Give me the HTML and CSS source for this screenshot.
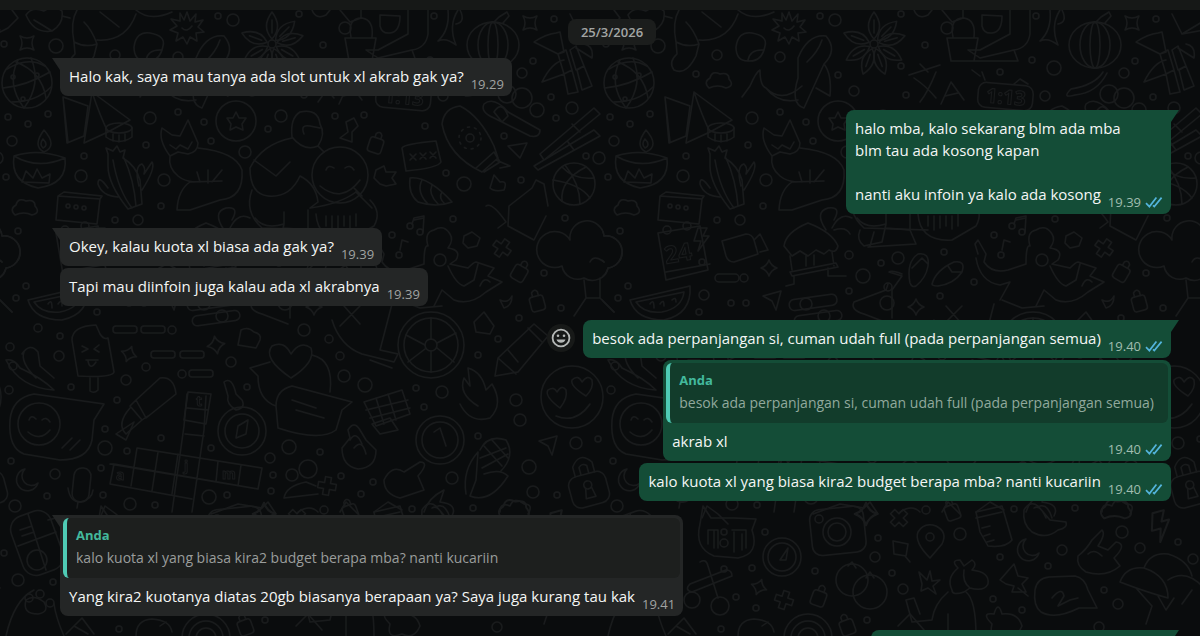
FILE: index.html
```html
<!DOCTYPE html>
<html lang="id">
<head>
<meta charset="utf-8">
<meta name="viewport" content="width=device-width, initial-scale=1">
<title>Chat</title>
<link rel="stylesheet" href="styles.css">
</head>
<body>
<svg class="sprites" aria-hidden="true">
  <defs>
    <symbol id="ticks" viewBox="0 0 18 12"><path d="M1 7.2 4.4 10.6 11.4 1.6M8 9.4 9.3 10.6 16.6 1.6" fill="none" stroke="currentColor" stroke-width="1.7"/></symbol>
    <g id="spark"><path d="M0-8Q2-2 8 0Q2 2 0 8Q-2 2-8 0Q-2-2 0-8Z"/></g>
    <g id="pad"><path d="M-7-7Q0-3 7-7Q3 0 7 7Q0 3-7 7Q-3 0-7-7Z"/></g>
    <g id="cross"><path d="M-3-9H3V-3H9V3H3V9H-3V3H-9V-3H-3Z"/></g>
    <g id="petal"><path d="M0-5C-9-15-6-24 0-32C6-24 9-15 0-5M0-11V-24"/></g>
    <g id="tag"><rect x="-7" y="-6" width="14" height="15" rx="3"/><path d="M-3-6V-10Q0-14 3-10V-6"/></g>
    <g id="bolt"><path d="M-3-11H6L2-3H8L-3 12L0 2H-7Z"/></g>
    <g id="moon"><path d="M-2-11A11 11 0 1 0 11 3A9 9 0 0 1-2-11Z"/></g>
    <g id="cloud"><path d="M-9 7Q-15 1-8-3Q-6-11 2-7Q11-9 11-2Q17 5 8 7Q0 3-9 7Z"/></g>
    <g id="bubble"><path d="M-30-8Q-28-20-16-21L10-22Q20-20 23-8L32 10L14 10Q-10 22-24 14Q-32 8-30-8Z"/></g>
    <g id="dart"><path d="M-9-5 9-10 4 9 0 0Z"/></g>
    <g id="art">
      <!-- upper band -->
      <path d="M0 32 8 28 18 18 12 10M26 15Q32 6 44 11Q54 4 62 11Q64 24 52 31Q34 34 26 15ZM62 16 70 18M34 20Q44 26 52 31"/>
      <path d="M77 10Q70 22 74 42L75 54Q66 62 72 70Q84 76 94 56L97 44Q92 30 84 22M97 40Q126 42 136 14M100 12 119 27M74 42Q85 48 97 44M136 10Q150 22 172 12"/>
      <path d="M134 47Q136 31 150 33Q166 36 163 46Q160 62 146 61Q134 61 134 47ZM146 60Q148 49 162 50"/>
      <path d="M187 12 190 21 196 14 195 22 203 20 198 27 204 32 196 33 197 41 190 37 187 44 183 37 176 41 178 33 170 30 177 26 171 19 180 21 180 13 184 20ZM182 28Q187 33 192 26"/>
      <path d="M196 58Q206 34 224 36Q236 50 222 64L202 108Q188 104 196 78ZM205 62Q216 52 220 40M222 64Q230 74 228 96L214 88M140 97 148 86Q154 72 158 70Q158 86 164 88Q180 104 200 86M164 88Q176 104 196 100"/>
      <use href="#cloud" x="116" y="81"/>
      <g transform="translate(272 44)"><circle r="4"/><use href="#petal"/><use href="#petal" transform="rotate(45)"/><use href="#petal" transform="rotate(75)"/><use href="#petal" transform="rotate(120)"/><use href="#petal" transform="rotate(160)"/><use href="#petal" transform="rotate(200)"/><use href="#petal" transform="rotate(240)"/><use href="#petal" transform="rotate(290)"/></g>
      <path d="M345 38H376L372 61H349ZM351 37Q347 18 362 18Q374 20 372 37M372 61H416L412 50L378 58 366 50H378L408 34V10M428 10V34Q426 48 412 50M380 15V26Q382 34 390 33Q400 32 400 16ZM340 10 350 22 361 18V10M312 10Q316 20 326 15L330 10"/>
      <circle cx="345" cy="28" r="6"/>
      <path d="M438 41Q450 30 448 10M438 41Q446 37 456 45M458 10Q448 26 456 45M456 24Q466 22 460 10"/>
      <g transform="translate(493 45)"><ellipse rx="26" ry="23"/><ellipse rx="15" ry="23"/><ellipse rx="5" ry="23"/><path d="M0-22 6-28 14-33 16-29 10-22M8 27Q0 40-24 44Q-34 54-20 50Q2 48 12 28"/></g>
      <use href="#pad" x="530" y="23"/>
      <path d="M534 42Q546 34 556 33L560 32 564 52 558 54ZM558 54 566 50 572 70 564 74ZM564 74 572 70 578 92 568 94ZM576 46 584 66 576 70 570 50ZM577 70 584 66 592 86 582 90ZM564 60Q552 62 542 82L564 74M584 44Q594 46 592 58L576 48M570 14 580 34 600 22M580 34 602 30"/>
      <!-- globe and lamp -->
      <circle cx="27" cy="83" r="25"/><path d="M7 69Q28 56 45 66M3 88Q26 86 50 72M12 102Q36 102 51 87M18 60Q6 84 24 108M31 58Q42 84 24 108M16 62Q42 72 46 98"/><circle cx="13" cy="77" r="2"/><circle cx="37" cy="75" r="2"/><circle cx="23" cy="99" r="2"/>
      <path d="M63 97 88 106 84 136 67 143ZM63 97 68 142M92 92 130 120 108 132 84 143ZM92 92Q100 116 108 132"/><ellipse cx="119" cy="128" rx="13" ry="5"/><path d="M106 128V137Q119 146 132 137V128M113 134V141M119 135V142M125 134V141"/>
      <path d="M14 156Q38 148 65 158Q68 184 38 188Q10 182 14 156ZM14 156Q38 170 65 158M44 152Q32 146 44 130Q58 146 44 152ZM43 148Q39 144 43 139Q49 145 43 148ZM22 182 26 171 33 178 37 169 42 178 50 174 49 183Z"/>
      <path d="M108 154 106 148 113 151 117 146 120 152 125 150 123 158Q136 166 140 180L142 204 128 209Q108 184 108 166ZM113 160Q118 190 132 208M124 158Q134 180 136 206M108 188Q98 174 98 184Q102 196 118 197M139 186Q134 166 142 164Q146 168 144 174L152 162Q156 168 142 190"/>
      <path d="M162 128 172 135 180 136 188 120 198 143Q198 152 188 154L178 152 170 156Q158 140 162 128ZM170 145 176 149 180 145 188 149 192 142M170 156Q168 168 178 176Q184 181 194 182M198 148Q236 152 242 170Q244 198 220 200L190 210H177Q178 190 190 182L222 181M200 182 197 172M208 183V170M212 182 222 170"/>
      <circle cx="236" cy="121" r="20"/><path d="M236 112 239 118 246 118 242 124 243 130 236 127 230 130 231 124 227 118 233 118Z"/>
      <path d="M292 137Q290 118 300 112Q318 108 320 124Q326 134 318 146Q304 152 292 137ZM304 134Q300 124 310 126L320 128M292 138Q262 144 250 168Q250 194 268 196Q290 198 300 176M254 160 276 176 290 162M318 146 324 152M300 176Q316 184 318 202L310 208Q340 204 356 192L372 208M252 190Q244 212 262 228L326 230"/>
      <circle cx="340" cy="175" r="28"/><path d="M326 170Q328 164 334 168M345 168Q350 164 354 170M320 186Q342 204 360 180M354 188 362 196 356 192"/>
      <use href="#tag" transform="translate(376 144) rotate(18)"/><path d="M346 122 354 118 358 126 352 132 352 142 340 138 348 132ZM376 170 384 166 386 172 396 172 392 178 396 184 386 186 380 184 374 178Z"/>
      <!-- translation card and digital clock -->
      <path d="M307 75 338 65M318 64 326 72M334 72Q326 92 318 102M312 78Q324 86 334 98"/><path d="M339 104 349 82 362 100M343 96 356 93"/>
      <rect x="376" y="84" width="55" height="25" rx="8" transform="rotate(5 403 96)"/><text x="384" y="104" transform="rotate(5 403 96)" font-size="20">1:13</text><path d="M412 84 418 79 426 84M378 76 370 70M383 80 380 72"/>
      <path d="M442 124Q444 108 460 106Q480 116 494 146L498 158 482 172Q448 156 442 124ZM476 168 494 152 500 162 484 172M496 160 510 166 500 168"/><circle cx="470" cy="138" r="4"/><circle cx="470" cy="138" r="11" stroke-dasharray="2 5"/>
      <path d="M484 104Q494 96 508 112L540 130Q540 138 530 136L494 118Q480 112 484 104ZM494 112Q502 100 508 116L502 122Z"/><circle cx="507" cy="94" r="9"/><circle cx="522" cy="98" r="10"/><circle cx="537" cy="110" r="7"/>
      <path d="M540 154 594 108 600 114 544 160ZM534 166 594 130 600 136 538 170ZM572 124 580 132M568 142 574 150"/>
      <circle cx="574" cy="184" r="21"/><path d="M562 167Q574 180 594 178M553 180Q580 184 590 198M586 167Q560 180 562 201M565 165Q580 184 580 204"/>
      <path d="M402 148Q404 144 436 141L441 162Q438 168 406 171ZM410 154 416 160M416 154 410 160M420 153 426 159M426 153 420 159M430 152 436 158M436 152 430 158"/>
      <path d="M410 178Q428 176 452 202Q436 208 418 202Q408 194 410 178ZM422 180Q416 192 428 204M432 185Q428 194 438 204M442 192Q438 198 445 204"/>
      <path d="M508 146 527 143 520 158ZM490 188 494 175 500 182Q508 180 504 190Q494 192 490 188ZM509 206 532 188 536 180 544 184 548 206M486 206Q492 202 506 222L498 228M509 206 508 226 534 240 546 216"/>
      <!-- message box, notes, voice wave -->
      <path d="M58 196 100 199 97 224 56 220ZM58 196 64 192 102 196 100 199"/><circle cx="68" cy="206" r="2"/><circle cx="76" cy="207" r="2"/><circle cx="84" cy="208" r="2"/>
      <use href="#cloud" x="24" y="208"/>
      <path d="M316 214Q318 242 350 240L374 226Q382 212 370 200M326 216V226M332 216V230M338 216V228M344 216V226M350 216V229M356 214V226"/>
      <path d="M182 246Q184 232 206 223Q230 232 236 246Q234 254 227 250L222 254 214 250 206 256 198 251 190 256ZM188 256 190 270M230 252 232 266M204 256V266M212 255V265M188 272 234 263 236 267 190 276ZM192 276V284L184 286M226 268V276L244 276M224 230Q212 212 226 208Q240 206 232 220M230 228Q238 212 250 218M232 230Q244 226 248 234"/>
      <path d="M255 218Q264 230 284 224L280 242 262 246Q254 240 258 230M284 224V212M284 228 308 230 314 244 266 247M272 232 268 246M308 230V210"/>
      <path d="M56 233 98 226 106 270 64 280ZM64 272 108 264"/><circle cx="65" cy="230" r="4"/><circle cx="85" cy="226" r="4"/><text x="64" y="264" transform="rotate(-10 64 264)" font-size="24">24</text>
      <use href="#bolt" x="99" y="239"/><path d="M120 241 144 234Q150 234 152 240L156 254 132 262Q126 262 124 256ZM152 240 158 234 166 250 158 252"/>
      <use href="#spark" x="167" y="268"/><rect x="113" y="274" width="24" height="8" rx="4"/><use href="#dart" x="170" y="301"/>
      <path d="M28 300 88 286Q90 314 62 320Q34 320 28 300ZM34 302 82 292Q80 308 60 312Q42 314 34 302ZM48 304Q52 298 52 308M58 304Q62 298 62 306M70 300Q74 296 74 302"/>
      <path d="M412 224 414 218 424 216 423 232M414 220 424 218M400 250 402 240 408 242"/><circle cx="410" cy="226" r="3"/><circle cx="420" cy="232" r="3"/><circle cx="399" cy="255" r="3"/>
      <path d="M464 236 472 232 480 238 477 246 468 248 463 243Z"/><use href="#cross" transform="translate(502 248) rotate(35)"/><use href="#tag" transform="translate(520 272) rotate(30)"/><use href="#tag" transform="translate(537 302) rotate(-15)"/>
      <path d="M308 283Q304 262 316 254Q328 252 326 266Q324 278 314 286Q310 288 308 283ZM310 268 320 258 326 264M330 284Q334 270 352 262Q364 260 360 272Q352 284 336 286Q330 286 330 284ZM346 266 350 272 360 272"/>
      <path d="M376 254 373 244 376 240 384 254 382 262Q390 274 406 270L424 264Q424 244 428 246Q424 232 434 230Q444 224 450 234Q454 240 448 248Q462 250 456 260L450 264 468 268Q474 262 476 262L494 268 488 276 502 282 486 292Q470 306 454 300L442 290 434 306M374 258Q378 282 398 285L408 282 398 300M448 266Q456 284 464 286L474 280 478 264M480 286Q484 276 490 282"/><circle cx="440" cy="260" r="6"/>
      <path d="M287 272 300 276 290 290 290 318M287 272Q290 270 300 274M286 284 284 290 252 302Q248 310 262 314L288 324"/><circle cx="285" cy="303" r="7"/><circle cx="286" cy="287" r="4"/><use href="#spark" x="314" y="307"/>
      <rect x="187" y="297" width="48" height="11" rx="5" transform="rotate(-8 210 302)"/><circle cx="204" cy="304" r="6"/><rect x="192" y="314" width="48" height="10" rx="5" transform="rotate(-8 210 318)"/><circle cx="222" cy="316" r="6"/>
      <g id="tree"><path d="M570 240A17 17 0 1 1 604 236M604 236A16 16 0 1 1 608 268A16 16 0 0 1 584 278A16 16 0 0 1 562 266A18 18 0 1 1 570 240M584 280 586 298H600V278M586 298 574 316M600 298 614 312M590 262Q594 254 604 262"/></g><use href="#tree" x="-602"/>
      <!-- middle band -->
      <path d="M72 340Q72 326 96 325L100 334Q104 340 108 338L114 372Q112 378 78 376ZM90 378V391Q94 394 98 390V378M82 346 88 349 82 352M99 345 94 349 99 352M86 360H98M88 361Q90 371 96 362"/>
      <rect x="113" y="326" width="24" height="7" rx="3"/><rect x="141" y="326" width="24" height="7" rx="3"/><circle cx="172" cy="330" r="4"/><rect x="151" y="351" width="24" height="7" rx="3"/><rect x="180" y="351" width="24" height="7" rx="3"/><rect x="189" y="370" width="24" height="7" rx="3"/><circle cx="182" cy="374" r="4"/><use href="#spark" transform="translate(129 354) rotate(20)"/><use href="#spark" transform="translate(216 345) rotate(-10) scale(1.1)"/><path d="M238 345 241 330Q248 326 254 332Q262 334 260 340L256 348Z"/>
      <path d="M6 360Q14 358 20 368 42 378 54 390Q20 388 6 360ZM22 354Q30 342 38 352L40 366 54 378M24 352Q20 362 36 378"/><circle cx="13" cy="366" r="4"/>
      <path d="M291 378Q262 358 272 346Q284 340 291 354Q300 340 311 348Q316 362 291 378ZM270 362 250 368 258 376Q258 400 276 406M312 355Q334 360 330 392M276 406Q276 390 292 386L352 402 342 410 336 430Q320 442 278 428ZM292 400 316 408M296 410 324 418"/>
      <path d="M10 420Q12 398 34 394L104 404 94 420 92 440Q88 460 60 460L24 454Q8 448 10 420Z"/><circle cx="39" cy="424" r="21"/><path d="M29 420Q31 414 36 419M42 420Q46 416 50 422M28 432Q40 442 50 430M62 448 72 438M70 450 80 440"/>
      <path d="M136 400 160 378Q174 376 176 394L146 418ZM136 400 130 406 142 420 148 416M130 408Q116 424 126 434L142 420M188 392 211 394 206 424 184 420ZM187 408 208 410M224 382Q232 376 236 394L242 400Q246 408 236 410Q226 404 228 396Z"/><text x="196" y="406" font-size="14">t</text><circle cx="242" cy="431" r="24"/><circle cx="242" cy="431" r="17"/><path d="M236 438 238 426 248 420 246 434ZM116 434 134 422 126 440Z"/>
      <circle cx="431" cy="345" r="33"/><circle cx="431" cy="345" r="27"/><circle cx="431" cy="345" r="6"/><path d="M431 318V339M431 351V372M425 345 406 335M425 349 408 362M437 343 456 333M437 348 454 362M332 320Q340 346 362 354L394 362 398 354 380 350 392 304M340 326 360 306M370 360 392 368M344 306 360 324M400 300 420 308 442 306"/>
      <path d="M495 376 498 358 534 324 548 336 518 372ZM498 358 516 374M528 328 542 342M508 350 518 362"/><path d="M478 406Q458 394 464 378L470 386 468 368Q482 372 486 390L492 384Q504 404 490 418Q470 424 460 404"/><circle cx="572" cy="397" r="31"/><path d="M560 408Q544 396 548 390Q554 386 557 392Q562 384 566 390Q568 398 560 408ZM586 396Q570 386 572 380Q578 374 582 382Q588 374 592 380Q594 388 586 396ZM556 416Q576 424 590 404M474 322 484 312 494 326 490 334 476 332ZM500 300Q508 304 512 296Q512 306 504 308Z"/>
      <path d="M364 402 402 390 410 414 376 426ZM376 398 384 424M388 394 396 420M366 410 408 400M370 418 410 408"/>
      <circle cx="440" cy="440" r="24"/><circle cx="440" cy="440" r="18"/><path d="M434 432 440 428 446 446"/>
      <path d="M466 494Q462 470 478 452L476 480 470 496Q490 504 508 476Q500 468 484 474M480 450Q488 434 506 440Q516 456 500 472M484 446 502 466M492 440 508 458M480 458 506 448M482 468 508 454"/>
      <path d="M187 394 184 426 172 512M206 396 204 430 192 512M185 434 204 436M137 448 262 468 258 489 110 464 114 464M137 448 131 486M114 464 258 489M114 464 110 484 192 499M158 452 152 491M178 454 172 494M218 461 216 482M241 465 238 486"/><text x="116" y="480" font-size="14">a</text><text x="222" y="479" font-size="14">m</text><text x="184" y="471" font-size="14">j</text>
      <rect x="73" y="468" width="17" height="34" rx="8" transform="rotate(6 82 485)"/><path d="M68 488Q70 502 80 502 92 500 93 490M78 502 77 508"/><use href="#moon" x="27" y="480"/>
      <path d="M342 448 350 438 348 430Q354 420 360 430L366 440 376 450Q376 468 358 469Q342 466 342 448ZM350 440Q356 430 362 444M354 448Q362 438 366 454M384 480Q392 464 404 472L420 462Q430 462 418 476L424 490 400 498Q384 494 384 480M372 424 390 418 398 430 380 434Z"/>
      <circle cx="292" cy="475" r="6"/><circle cx="308" cy="469" r="9"/><path d="M284 498Q286 486 306 482L316 486M284 498 318 494"/><use href="#cross" transform="translate(327 486) rotate(10)"/>
      <g transform="translate(587 482) rotate(-15)"><rect x="-19" y="-8" width="38" height="32" rx="9"/><path d="M-10-8V-18Q0-32 10-18V-8M-4-8V-16Q0-20 4-16V-8M-3 6-5 16H5L3 6"/><circle cy="3" r="4"/></g>
      <use href="#dart" x="548" y="446"/><path d="M424 512Q428 498 444 490L440 502Q458 504 452 516M500 512Q500 502 510 506Q514 496 524 504Q534 504 528 514"/>
      <!-- lower band -->
      <rect x="16" y="512" width="42" height="62" rx="14" transform="rotate(-20 37 543)"/><path d="M18 546 56 532M28 514 46 570M20 530 32 526M22 536 34 532M48 520 56 518"/><circle cx="37" cy="560" r="10"/><path d="M100 518 105 506 116 514 126 524M211 514 238 504 262 508 268 502 276 514M298 512Q310 504 318 512M340 512 346 502 358 514M374 512 388 502 402 510"/>
      <path d="M101 506 109 518 132 518 154 519 150 530Q158 554 136 558L112 556Q92 548 98 524ZM106 530V544M112 530V548M132 532V552M140 534V550M106 530H116V548M130 530H144V548"/><circle cx="122" cy="532" r="3"/><circle cx="122" cy="543" r="4"/>
      <circle cx="180" cy="557" r="19"/><circle cx="180" cy="557" r="14"/><path d="M178 560 186 548 184 560Z"/><path d="M98 562Q104 558 106 566L116 598M130 576 90 592Q82 590 88 584L124 570Q130 570 130 576Z"/><circle cx="118" cy="606" r="9"/><circle cx="90" cy="600" r="8"/><use href="#spark" transform="translate(157 587) rotate(20)"/><use href="#cross" transform="translate(182 600) rotate(18)"/>
      <rect x="209" y="508" width="54" height="46" rx="10" transform="rotate(-6 235 532)"/><circle cx="235" cy="532" r="14"/><circle cx="235" cy="532" r="9"/><circle cx="217" cy="519" r="4"/><use href="#spark" transform="translate(264 514) scale(1.4)"/>
      <use href="#cross" transform="translate(297 518) rotate(45)"/><path d="M328 558Q312 542 316 532Q322 522 334 526Q346 532 340 544Z"/><circle cx="328" cy="537" r="4"/><use href="#tag" transform="translate(350 511) rotate(-20)"/><path d="M291 541 306 544 304 556 292 554ZM303 556 308 562"/>
      <path d="M374 512 400 506 410 540Q404 548 386 546L378 532ZM374 518 400 512M380 528 388 526M382 536 388 534M385 542 392 540"/><path d="M422 510Q428 500 436 506L448 520 464 522Q466 528 456 530Q444 540 430 532Q420 524 422 510ZM432 508Q438 504 444 518M438 506Q446 504 450 518"/>
      <use href="#cloud" transform="translate(513 510) scale(1.2)"/><use href="#bolt" transform="translate(558 526) rotate(-15) scale(1.3)"/><use href="#moon" x="426" y="550"/><path d="M476 556Q484 550 490 540L500 530Q504 534 496 546L506 550 514 542Q526 544 512 558L518 566Q504 578 484 572Q474 566 476 556ZM486 554Q492 548 500 556"/>
      <circle cx="250" cy="580" r="16"/><circle cx="268" cy="592" r="17"/><path d="M264 578 268 572 272 578M246 566 250 562 254 568"/><path d="M317 572 325 580 328 571 330 581 338 580 331 586 334 594 326 588 319 591 320 584Z"/><path d="M350 590Q344 578 356 568Q348 560 358 560L362 566 370 560Q376 564 370 570Q388 572 386 584Q382 592 368 588L362 592Q350 596 350 590ZM362 570Q360 582 368 588M346 592Q332 604 330 620L310 622 304 600 312 598 318 614M364 592Q374 600 374 636M346 614V636"/>
      <path d="M398 580 412 564 416 576 426 578 420 584 424 592 410 592 412 586 404 584ZM416 588 426 596"/><use href="#bubble" transform="translate(463 598)"/><path d="M450 598Q460 586 462 596L456 606 468 600 476 598"/>
      <path d="M518 582Q524 566 542 568Q566 576 566 598Q544 592 518 582ZM542 568Q548 552 566 554Q586 560 590 576M566 580Q584 568 602 588M534 588 550 606 544 624M556 596 564 610 572 598M590 590 580 604"/>
      <path d="M6 636Q14 600 34 590M26 600Q22 614 38 614Q50 612 44 602Q34 594 26 600ZM54 604Q56 618 64 636"/><circle cx="29" cy="598" r="4"/><circle cx="40" cy="594" r="4"/><circle cx="50" cy="603" r="4"/><path d="M66 634 82 618 94 634M74 626 88 634M136 636Q136 620 152 619Q170 620 172 632M160 626 166 622"/><circle cx="206" cy="638" r="24"/><circle cx="206" cy="638" r="17"/><circle cx="206" cy="638" r="10"/><use href="#tag" transform="translate(245 626) rotate(-20)"/><use href="#tag" transform="translate(217 597) rotate(20)"/><path d="M296 626 308 614 322 630M390 624Q378 612 392 614Q396 600 400 614Q416 612 420 626Q414 640 402 634Q386 640 390 624Z"/>
      <!-- scattered dots -->
      <g id="dots"><circle cx="56" cy="46" r="7"/><circle cx="4" cy="44" r="3"/><use href="#pad" x="27" y="43"/><circle cx="115" cy="55" r="5"/><circle cx="218" cy="16" r="3"/><circle cx="233" cy="20" r="6"/><circle cx="323" cy="45" r="3"/><circle cx="299" cy="14" r="3"/><circle cx="434" cy="16" r="3"/><circle cx="554" cy="19" r="3"/><circle cx="236" cy="75" r="3"/><circle cx="252" cy="91" r="5"/><circle cx="304" cy="95" r="3"/><circle cx="299" cy="66" r="3"/><circle cx="398" cy="72" r="3"/><circle cx="430" cy="60" r="3"/><circle cx="452" cy="68" r="7"/><circle cx="443" cy="96" r="5"/><circle cx="522" cy="73" r="5"/><circle cx="533" cy="61" r="3"/><circle cx="178" cy="57" r="5"/><circle cx="94" cy="74" r="3"/><circle cx="178" cy="112" r="3"/><circle cx="150" cy="118" r="6"/><circle cx="204" cy="122" r="3"/><circle cx="281" cy="116" r="6"/><circle cx="268" cy="129" r="3"/><circle cx="335" cy="116" r="3"/><circle cx="364" cy="115" r="3"/><circle cx="48" cy="114" r="3"/><circle cx="8" cy="117" r="3"/><circle cx="28" cy="124" r="3"/><circle cx="12" cy="141" r="5"/><circle cx="146" cy="145" r="3"/><circle cx="211" cy="141" r="3"/><circle cx="245" cy="152" r="6"/><circle cx="84" cy="156" r="3"/><circle cx="81" cy="176" r="6"/><circle cx="6" cy="177" r="3"/><circle cx="164" cy="180" r="6"/><circle cx="161" cy="206" r="3"/><circle cx="551" cy="97" r="3"/><circle cx="572" cy="108" r="6"/><circle cx="556" cy="118" r="3"/><circle cx="425" cy="126" r="3"/><circle cx="504" cy="136" r="3"/><circle cx="586" cy="156" r="3"/><circle cx="599" cy="158" r="6"/><circle cx="464" cy="184" r="7"/><circle cx="446" cy="173" r="3"/><circle cx="521" cy="180" r="3"/><circle cx="115" cy="220" r="3"/><circle cx="138" cy="220" r="5"/><circle cx="18" cy="231" r="3"/><circle cx="100" cy="262" r="3"/><circle cx="26" cy="286" r="3"/><circle cx="16" cy="298" r="3"/><circle cx="142" cy="278" r="4"/><circle cx="102" cy="295" r="5"/><circle cx="97" cy="312" r="3"/><circle cx="129" cy="303" r="3"/><circle cx="144" cy="303" r="3"/><circle cx="247" cy="255" r="4"/><circle cx="261" cy="276" r="7"/><circle cx="279" cy="263" r="3"/><circle cx="296" cy="258" r="6"/><circle cx="247" cy="291" r="3"/><circle cx="342" cy="252" r="3"/><circle cx="372" cy="282" r="3"/><circle cx="338" cy="296" r="3"/><circle cx="392" cy="235" r="3"/><circle cx="453" cy="219" r="3"/><circle cx="565" cy="218" r="3"/><circle cx="544" cy="273" r="3"/><circle cx="561" cy="308" r="3"/><circle cx="519" cy="318" r="3"/><circle cx="38" cy="328" r="4"/><circle cx="60" cy="336" r="3"/><circle cx="59" cy="356" r="5"/><circle cx="10" cy="347" r="4"/><circle cx="126" cy="380" r="5"/><circle cx="146" cy="367" r="4"/><circle cx="71" cy="387" r="3"/><circle cx="9" cy="390" r="4"/><circle cx="117" cy="400" r="3"/><circle cx="231" cy="362" r="5"/><circle cx="247" cy="387" r="3"/><circle cx="304" cy="330" r="6"/><circle cx="329" cy="339" r="4"/><circle cx="340" cy="356" r="4"/><circle cx="344" cy="376" r="6"/><circle cx="365" cy="385" r="7"/><circle cx="416" cy="388" r="3"/><circle cx="442" cy="392" r="6"/><circle cx="424" cy="407" r="3"/><circle cx="498" cy="339" r="3"/><circle cx="478" cy="355" r="3"/><circle cx="516" cy="400" r="6"/><circle cx="520" cy="420" r="6"/><circle cx="576" cy="443" r="6"/><circle cx="529" cy="467" r="7"/><circle cx="478" cy="436" r="3"/><circle cx="452" cy="478" r="6"/><circle cx="533" cy="492" r="6"/><circle cx="557" cy="495" r="3"/><circle cx="598" cy="439" r="3"/><circle cx="105" cy="448" r="7"/><circle cx="127" cy="451" r="3"/><circle cx="101" cy="468" r="3"/><circle cx="105" cy="429" r="3"/><circle cx="11" cy="461" r="3"/><circle cx="55" cy="474" r="5"/><circle cx="47" cy="496" r="3"/><circle cx="15" cy="506" r="6"/><circle cx="103" cy="495" r="3"/><circle cx="130" cy="504" r="6"/><circle cx="155" cy="505" r="3"/><circle cx="209" cy="497" r="7"/><circle cx="227" cy="495" r="3"/><circle cx="161" cy="438" r="3"/><circle cx="211" cy="448" r="3"/><circle cx="289" cy="447" r="7"/><circle cx="270" cy="458" r="5"/><circle cx="320" cy="452" r="3"/><circle cx="273" cy="475" r="3"/><circle cx="271" cy="491" r="3"/><circle cx="341" cy="476" r="3"/><circle cx="361" cy="494" r="3"/><circle cx="373" cy="482" r="3"/><circle cx="4" cy="553" r="3"/><circle cx="18" cy="580" r="6"/><circle cx="53" cy="582" r="3"/><circle cx="163" cy="532" r="3"/><circle cx="122" cy="569" r="3"/><circle cx="150" cy="568" r="3"/><circle cx="134" cy="597" r="3"/><circle cx="154" cy="608" r="3"/><circle cx="119" cy="629" r="3"/><circle cx="276" cy="538" r="3"/><circle cx="273" cy="557" r="5"/><circle cx="213" cy="571" r="3"/><circle cx="290" cy="573" r="3"/><circle cx="301" cy="589" r="5"/><circle cx="324" cy="510" r="4"/><circle cx="358" cy="534" r="6"/><circle cx="412" cy="509" r="3"/><circle cx="473" cy="508" r="3"/><circle cx="398" cy="557" r="3"/><circle cx="446" cy="566" r="3"/><circle cx="460" cy="550" r="5"/><circle cx="520" cy="532" r="6"/><circle cx="538" cy="548" r="5"/><circle cx="576" cy="542" r="3"/><circle cx="591" cy="559" r="5"/><circle cx="502" cy="590" r="3"/><circle cx="516" cy="604" r="5"/><circle cx="391" cy="599" r="3"/><circle cx="420" cy="610" r="3"/><circle cx="265" cy="620" r="3"/><circle cx="497" cy="627" r="5"/></g>
    </g>
    <pattern id="wallpaper" width="602" height="640" patternUnits="userSpaceOnUse">
      <use href="#art"/><use href="#art" x="-602"/>
    </pattern>
  </defs>
</svg>

<header class="topbar"></header>
<main class="chat">
  <svg class="wallpaper" aria-hidden="true"><rect width="100%" height="100%" fill="url(#wallpaper)"/></svg>
  <time class="date">25/3/2026</time>

  <article class="msg in tail first">
    <p class="text">Halo kak, saya mau tanya ada slot untuk xl akrab gak ya?</p>
    <span class="meta">19.29</span>
  </article>

  <article class="msg out tail">
    <p class="text wide">halo mba, kalo sekarang blm ada mba<br>blm tau ada kosong kapan<br><br></p>
    <p class="text">nanti aku infoin ya kalo ada kosong</p>
    <span class="meta">19.39 <svg class="ticks" role="img" aria-label="Dibaca"><use href="#ticks"/></svg></span>
  </article>

  <article class="msg in tail">
    <p class="text">Okey, kalau kuota xl biasa ada gak ya?</p>
    <span class="meta">19.39</span>
  </article>
  <article class="msg in">
    <p class="text">Tapi mau diinfoin juga kalau ada xl akrabnya</p>
    <span class="meta">19.39</span>
  </article>

  <div class="row">
    <button class="react" type="button" aria-label="Beri reaksi">
      <svg viewBox="0 0 20 20" class="smile" aria-hidden="true"><circle cx="10" cy="10" r="8.4" fill="none" stroke="currentColor" stroke-width="1.8"/><circle cx="7" cy="7.8" r="1.3" fill="currentColor"/><circle cx="13" cy="7.8" r="1.3" fill="currentColor"/><path d="M5.500 11.500H14.500Q13.300 14.800 10 14.800Q6.700 14.800 5.500 11.500Z" fill="currentColor"/></svg>
    </button>
    <article class="msg out tail">
      <p class="text">besok ada perpanjangan si, cuman udah full (pada perpanjangan semua)</p>
      <span class="meta">19.40 <svg class="ticks" role="img" aria-label="Dibaca"><use href="#ticks"/></svg></span>
    </article>
  </div>
  <article class="msg out">
    <blockquote class="quote"><strong class="who">Anda</strong><span class="said">besok ada perpanjangan si, cuman udah full (pada perpanjangan semua)</span></blockquote>
    <p class="text">akrab xl</p>
    <span class="meta">19.40 <svg class="ticks" role="img" aria-label="Dibaca"><use href="#ticks"/></svg></span>
  </article>
  <article class="msg out">
    <p class="text">kalo kuota xl yang biasa kira2 budget berapa mba? nanti kucariin</p>
    <span class="meta">19.40 <svg class="ticks" role="img" aria-label="Dibaca"><use href="#ticks"/></svg></span>
  </article>

  <article class="msg in tail">
    <blockquote class="quote"><strong class="who">Anda</strong><span class="said">kalo kuota xl yang biasa kira2 budget berapa mba? nanti kucariin</span></blockquote>
    <p class="text">Yang kira2 kuotanya diatas 20gb biasanya berapaan ya? Saya juga kurang tau kak</p>
    <span class="meta">19.41</span>
  </article>

  <article class="msg out tail next"></article>
</main>
</body>
</html>
```
FILE: styles.css
```css
* { box-sizing: border-box; }

body {
  margin: 0;
  height: 100vh;
  display: flex;
  flex-direction: column;
  overflow: hidden;
  background: #0a0c0d;
  color: #f4f6f5;
  font: 15px/22px "Open Sans", "Noto Sans", sans-serif;
}

.sprites { position: absolute; width: 0; height: 0; }

.topbar { flex: none; height: 10px; background: #161817; }

.chat {
  position: relative;
  flex: 1;
  display: flex;
  flex-direction: column;
  padding: 9px 29px 0 60px;
  overflow: hidden;
}

.wallpaper {
  position: absolute;
  inset: -10px 0 0;
  width: 100%;
  height: calc(100% + 10px);
}

#art {
  fill: none;
  stroke: #191b1c;
  stroke-width: 1.5px;
  stroke-linejoin: round;
  stroke-linecap: round;
  font-family: "Open Sans", sans-serif;
  font-weight: 700;
}

#art text { stroke-width: 1px; }

.date {
  position: relative;
  align-self: center;
  margin-right: 7px;
  padding: 2px 13px;
  border-radius: 8px;
  background: #1b1d1c;
  color: #a3a6a5;
  font-size: 13px;
  font-weight: 600;
}

.msg {
  position: relative;
  flex: none;
  display: grid;
  grid-template-columns: auto auto;
  justify-content: space-between;
  column-gap: 7px;
  margin-top: 2px;
  padding: 7px 8px 9px 9px;
  border-radius: 8px;
}

.in { align-self: flex-start; background: #242626; --bubble: #242626; }
.out { align-self: flex-end; background: #144d37; --bubble: #144d37; }

.msg.tail { margin-top: 14px; }
.msg.first { margin-top: 13px; }

.tail::before {
  content: "";
  position: absolute;
  top: 0;
  width: 16px;
  height: 12px;
  background: var(--bubble);
}

.in.tail::before { left: -8px; clip-path: polygon(0 0, 100% 0, 100% 100%, 8px 100%); }
.out.tail::before { right: -8px; clip-path: polygon(0 0, 100% 0, 8px 100%, 0 100%); }

.text { margin: 0; }
.wide { grid-column: 1 / -1; }

.meta {
  align-self: end;
  justify-self: end;
  display: flex;
  align-items: center;
  gap: 4px;
  margin-bottom: -7px;
  color: #a0a3a2;
  font-size: 13px;
  line-height: 20px;
}

.out .meta { color: #a0bdaf; }
.ticks { width: 18px; height: 12px; color: #53b4dc; }

.row { display: flex; justify-content: flex-end; align-items: flex-end; gap: 8px; position: relative; }
.row .msg { margin-top: 14px; }

.react {
  display: grid;
  place-items: center;
  width: 28px;
  height: 28px;
  margin: 0 0 6px;
  padding: 0;
  border: 0;
  border-radius: 50%;
  background: #171918;
  color: #b5b8b7;
}

.smile { width: 20px; height: 20px; }

.quote {
  position: relative;
  z-index: 1;
  grid-column: 1 / -1;
  display: flex;
  flex-direction: column;
  margin: -4px -5px 7px -6px;
  padding: 6px 14px 8px 9px;
  border-left: 4px solid #4fcbb5;
  border-radius: 6px;
  background: #1d1f1e;
  font-size: 14px;
}

.out .quote { background: #123c2b; }
.who { color: #43b99d; font-size: 13px; font-weight: 700; line-height: 22px; }
.said { color: #9a9d9c; line-height: 24px; }
.out .said { color: #91a99d; }

.next { width: 300px; height: 60px; }
```
